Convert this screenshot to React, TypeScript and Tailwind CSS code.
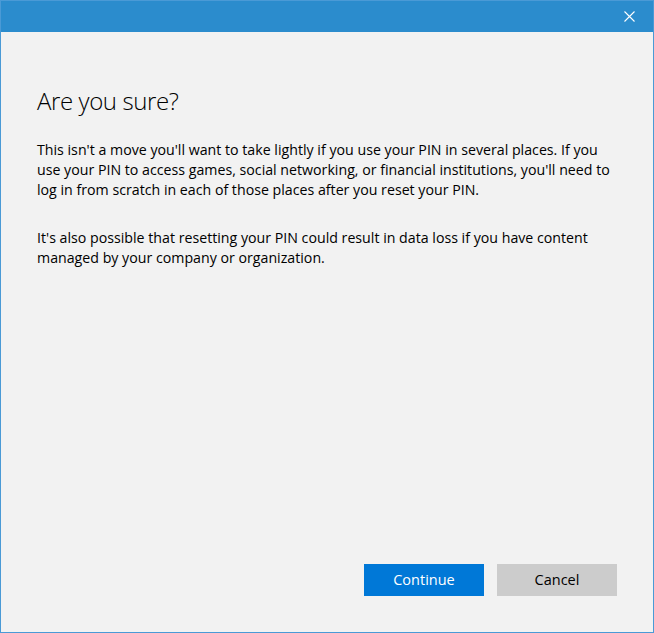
import React from 'react';

const App: React.FC = () => {
  return (
    <div
      className="w-[654px] h-[633px] flex flex-col bg-[#f2f2f2] border border-[#4a9ad6] overflow-hidden"
      style={{ fontFamily: '"Open Sans", "Noto Sans", sans-serif' }}
    >
      {/* Title bar */}
      <div className="h-[31px] shrink-0 bg-[#2b8ccd] flex items-center justify-end pr-[18px]">
        <svg className="w-[11px] h-[11px]" viewBox="0 0 11 11" fill="none" stroke="#ffffff" strokeWidth={1.1}>
          <path d="M0.5 0.5L10.5 10.5M10.5 0.5L0.5 10.5" />
        </svg>
      </div>

      {/* Content */}
      <div className="flex-1 flex flex-col px-[36px] pb-[36px]">
        <h1 className="mt-[52px] text-[24px] leading-[34px] font-light tracking-[-0.4px] text-[#000000]">Are you sure?</h1>
        <p className="mt-[22px] text-[14.2px] leading-[20px] text-[#000000]">
          This isn't a move you'll want to take lightly if you use your PIN in several places. If you use your PIN to access games, social networking, or financial institutions, you'll need to log in from scratch in each of those places after you reset your PIN.
        </p>
        <p className="mt-[28px] text-[14.2px] leading-[20px] text-[#000000]">
          It's also possible that resetting your PIN could result in data loss if you have content managed by your company or organization.
        </p>

        <div className="mt-auto flex justify-end gap-[13px]">
          <button className="w-[120px] h-[32px] bg-[#0078d7] text-white text-[14.5px]">Continue</button>
          <button className="w-[120px] h-[32px] bg-[#cccccc] text-black text-[14.5px]">Cancel</button>
        </div>
      </div>
    </div>
  );
};

export default App;
